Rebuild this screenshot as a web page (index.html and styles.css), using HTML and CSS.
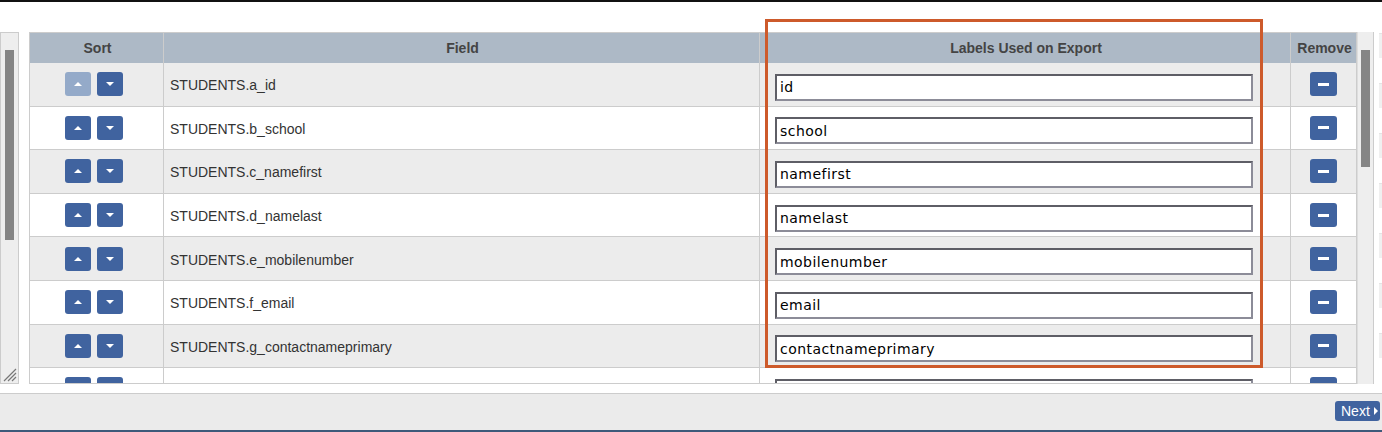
FILE: index.html
```html
<!DOCTYPE html>
<html>
<head>
<meta charset="utf-8">
<link rel="stylesheet" href="styles.css">
</head>
<body>
<div class="topline"></div>
<div class="main">
  <div class="leftpanel">
    <div class="lthumb"></div>
    <svg class="grip" width="14" height="14" viewBox="0 0 14 14">
      <path d="M1 13 L13 1 M5 13 L13 5 M9 13 L13 9" stroke="#777" stroke-width="1.2" fill="none"/>
    </svg>
  </div>
  <div class="tablewrap">
    <div class="row head">
      <div class="cell">Sort</div>
      <div class="cell">Field</div>
      <div class="cell">Labels Used on Export</div>
      <div class="cell">Remove</div>
    </div>
    <div class="row odd">
      <div class="cell sort"><span class="btn disabled"><i class="up"></i></span><span class="btn"><i class="down"></i></span></div>
      <div class="cell field">STUDENTS.a_id</div>
      <div class="cell label"><input class="inp" value="id"></div>
      <div class="cell rem"><span class="btn minus"><i class="bar"></i></span></div>
    </div>
    <div class="row">
      <div class="cell sort"><span class="btn"><i class="up"></i></span><span class="btn"><i class="down"></i></span></div>
      <div class="cell field">STUDENTS.b_school</div>
      <div class="cell label"><input class="inp" value="school"></div>
      <div class="cell rem"><span class="btn minus"><i class="bar"></i></span></div>
    </div>
    <div class="row odd">
      <div class="cell sort"><span class="btn"><i class="up"></i></span><span class="btn"><i class="down"></i></span></div>
      <div class="cell field">STUDENTS.c_namefirst</div>
      <div class="cell label"><input class="inp" value="namefirst"></div>
      <div class="cell rem"><span class="btn minus"><i class="bar"></i></span></div>
    </div>
    <div class="row">
      <div class="cell sort"><span class="btn"><i class="up"></i></span><span class="btn"><i class="down"></i></span></div>
      <div class="cell field">STUDENTS.d_namelast</div>
      <div class="cell label"><input class="inp" value="namelast"></div>
      <div class="cell rem"><span class="btn minus"><i class="bar"></i></span></div>
    </div>
    <div class="row odd">
      <div class="cell sort"><span class="btn"><i class="up"></i></span><span class="btn"><i class="down"></i></span></div>
      <div class="cell field">STUDENTS.e_mobilenumber</div>
      <div class="cell label"><input class="inp" value="mobilenumber"></div>
      <div class="cell rem"><span class="btn minus"><i class="bar"></i></span></div>
    </div>
    <div class="row">
      <div class="cell sort"><span class="btn"><i class="up"></i></span><span class="btn"><i class="down"></i></span></div>
      <div class="cell field">STUDENTS.f_email</div>
      <div class="cell label"><input class="inp" value="email"></div>
      <div class="cell rem"><span class="btn minus"><i class="bar"></i></span></div>
    </div>
    <div class="row odd">
      <div class="cell sort"><span class="btn"><i class="up"></i></span><span class="btn"><i class="down"></i></span></div>
      <div class="cell field">STUDENTS.g_contactnameprimary</div>
      <div class="cell label"><input class="inp" value="contactnameprimary"></div>
      <div class="cell rem"><span class="btn minus"><i class="bar"></i></span></div>
    </div>
    <div class="row">
      <div class="cell sort"><span class="btn"><i class="up"></i></span><span class="btn"><i class="down"></i></span></div>
      <div class="cell field"></div>
      <div class="cell label"><input class="inp" value=""></div>
      <div class="cell rem"><span class="btn minus"><i class="bar"></i></span></div>
    </div>
  </div>
  <div class="vscroll"><div class="vthumb"></div></div>
  <div class="sliver">
    <div class="sbox"></div><div class="sbox"></div><div class="sbox"></div><div class="sbox"></div>
    <div class="sbox"></div><div class="sbox"></div><div class="sbox"></div>
  </div>
</div>
<div class="footer">
  <span class="next">Next<i class="rtri"></i></span>
</div>
<div class="bottomline"></div>
<div class="highlight"></div>
</body>
</html>
```

FILE: styles.css
```css
html, body {
  margin: 0;
  padding: 0;
  background: #fff;
  width: 1382px;
  height: 432px;
  overflow: hidden;
  font-family: "Liberation Sans", Arial, sans-serif;
}
body { position: relative; }

.topline {
  height: 2px;
  background: #111;
}

.main {
  margin-top: 30px;
  height: 352px;
  display: flex;
  align-items: stretch;
}

.leftpanel {
  width: 17px;
  background: #eeeeee;
  border: 1px solid #cccccc;
  position: relative;
  flex: none;
}
.lthumb {
  position: absolute;
  left: 4px;
  top: 17px;
  width: 9px;
  height: 190px;
  background: #858585;
}
.grip {
  position: absolute;
  left: 2px;
  bottom: 1px;
}

.tablewrap {
  margin-left: 10px;
  width: 1327px;
  border-left: 1px solid #cccccc;
  border-top: 1px solid #cccccc;
  border-bottom: 1px solid #cccccc;
  overflow: hidden;
  flex: none;
}

.row {
  display: grid;
  grid-template-columns: 134px 596px 531px 66px;
  height: 43.6px;
  background: #ffffff;
}
.row.odd { background: #ececec; }
.row.head {
  height: 30px;
  background: #adb9c6;
}

.cell {
  box-sizing: border-box;
  border-right: 1px solid #cccccc;
  border-bottom: 1px solid #cccccc;
  display: flex;
  align-items: center;
  min-width: 0;
}
.head .cell {
  border-bottom: none;
  justify-content: center;
  font-weight: bold;
  font-size: 14px;
  color: #444;
  padding-left: 2px;
}

.sort {
  justify-content: center;
  gap: 6px;
  padding-right: 6px;
}
.field {
  padding-left: 6px;
  padding-top: 2px;
  font-size: 14px;
  color: #333;
}
.label {
  padding-left: 15px;
  padding-top: 6px;
}
.rem {
  justify-content: center;
  padding-right: 1px;
}

.btn {
  width: 26px;
  height: 24px;
  border-radius: 3px;
  background: #40639f;
  display: flex;
  align-items: center;
  justify-content: center;
}
.btn.disabled { background: #94aac9; }
.btn.minus { width: 27px; }

.up {
  width: 0; height: 0;
  border-left: 4px solid transparent;
  border-right: 4px solid transparent;
  border-bottom: 4px solid #fff;
}
.down {
  width: 0; height: 0;
  border-left: 4px solid transparent;
  border-right: 4px solid transparent;
  border-top: 4px solid #fff;
}
.bar {
  width: 11px;
  height: 3px;
  background: #fff;
}

.inp {
  box-sizing: border-box;
  width: 478px;
  height: 27px;
  margin: 0;
  padding: 0 3px;
  border: 2px solid;
  border-color: #5e5e66 #8c8c98 #8c8c98 #5e5e66;
  background: #fff;
  font-family: "DejaVu Sans", Verdana, sans-serif;
  font-size: 14px;
  letter-spacing: 0.45px;
  color: #000;
  outline: none;
}

.vscroll {
  background: #eeeeee;
  border-right: 1px solid #cccccc;
  border-left: 1px solid #dddddd;
  position: relative;
  flex: none;
  box-sizing: border-box;
  width: 17px;
}
.vthumb {
  position: absolute;
  left: 3px;
  top: 18px;
  width: 9px;
  height: 117px;
  background: #858585;
}

.sliver {
  margin-left: 5px;
  flex: 1;
  display: flex;
  flex-direction: column;
  gap: 25px;
  padding-top: 1px;
  overflow: hidden;
}
.sbox {
  height: 24px;
  background: #f0f0f0;
  border-top: 1px solid #e4e4e4;
  flex: none;
}

.footer {
  margin-top: 9px;
  border-top: 1px solid #cccccc;
  background: #ebebeb;
  display: flex;
  justify-content: flex-end;
  align-items: flex-start;
  padding-top: 7px;
  padding-right: 2px;
  box-sizing: border-box;
  height: 37px;
}
.next {
  width: 45px;
  height: 20px;
  box-sizing: border-box;
  border-radius: 3px;
  background: #40639f;
  color: #fff;
  font-family: "Liberation Sans", Arial, sans-serif;
  font-size: 14px;
  display: flex;
  align-items: center;
  padding-left: 6px;
  gap: 4px;
}
.rtri {
  width: 0; height: 0;
  border-top: 4px solid transparent;
  border-bottom: 4px solid transparent;
  border-left: 4px solid #fff;
}

.bottomline {
  height: 2px;
  background: #3d5a7a;
}

.highlight {
  position: absolute;
  left: 765px;
  top: 19px;
  width: 498px;
  height: 349px;
  box-sizing: border-box;
  border: 3px solid #cd5a2b;
  pointer-events: none;
}
```
